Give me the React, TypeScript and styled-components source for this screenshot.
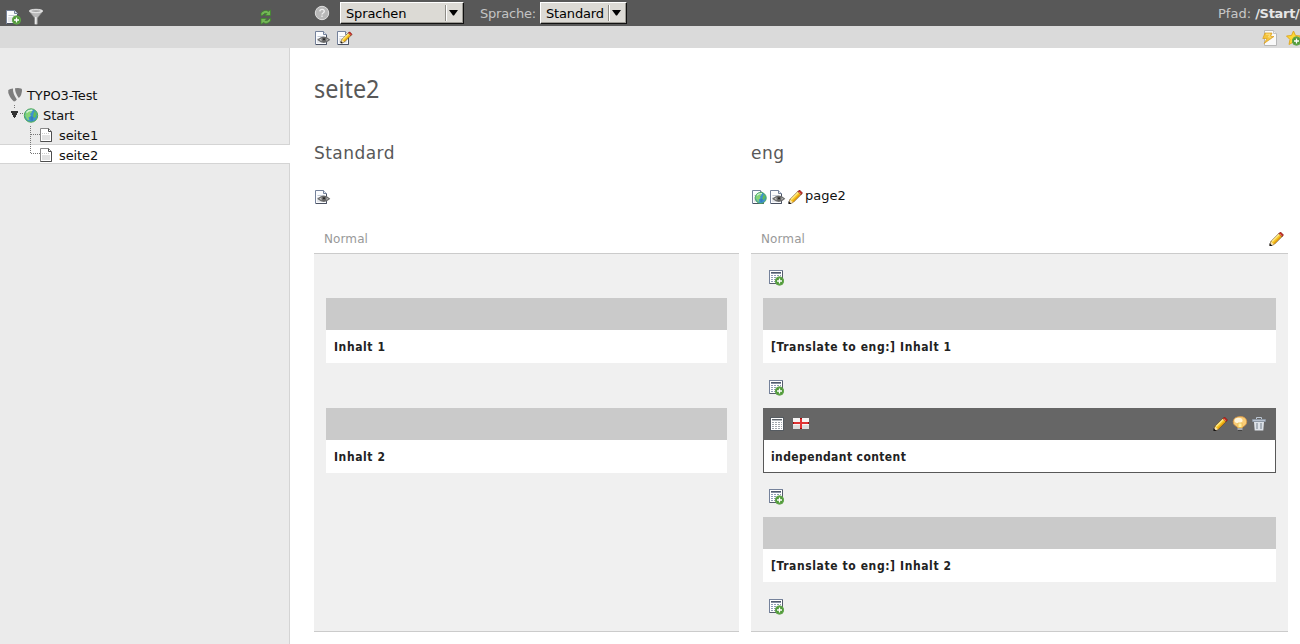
import React from 'react';
import styled, { createGlobalStyle } from 'styled-components';

const GlobalStyle = createGlobalStyle`
  * { box-sizing: border-box; }
  html, body { margin: 0; padding: 0; height: 644px; overflow: hidden; background: #fff; }
  body { font: 13px/16px "DejaVu Sans", Verdana, sans-serif; color: #111; }
  svg { display: block; flex: none; overflow: visible; }
`;

const Page = styled.div`
  width: 1300px;
  height: 644px;
  display: flex;
  flex-direction: column;
  overflow: hidden;
`;
const Bar = styled.div<{ $dark?: boolean }>`
  display: flex;
  flex: none;
  height: ${p => (p.$dark ? 26 : 22)}px;
  background: ${p => (p.$dark ? '#585858' : '#dadada')};
`;
const TreeTools = styled.div`
  width: 290px;
  display: flex;
  padding: 9px 16px 0 6px;
`;
const Spacer = styled.div`
  flex: 1;
`;
const DocTools = styled.div<{ $top: number }>`
  flex: 1;
  min-width: 0;
  display: flex;
  align-items: flex-start;
  padding: ${p => p.$top}px 0 0 24px;
`;
const HelpSlot = styled.span`
  padding-top: 3px;
`;
const StarSlot = styled.span`
  width: 14px;
  overflow: hidden;
`;
const Label = styled.span`
  color: #c4c4c4;
  margin: 4px 4px 0 16px;
  width: 56px;
  letter-spacing: -0.2px;
  white-space: nowrap;
`;
const Path = styled.span`
  color: #c8c8c8;
  padding-top: 4px;
  width: 82px;
  white-space: pre;
  b { color: #e6e6e6; letter-spacing: -0.3px; }
`;
const SelectBox = styled.div<{ $width: number }>`
  display: flex;
  width: ${p => p.$width}px;
  height: 22px;
  background: #dcdad5;
  border: 1px solid #fff;
  border-right-color: #111;
  border-bottom-color: #111;
  box-shadow: inset -1px -1px #9c9a94;
  color: #000;
  padding: 3px 0 0 5px;
`;
const SelectText = styled.span`
  flex: 1;
  letter-spacing: -0.15px;
  white-space: nowrap;
`;
const SelectArrow = styled.span`
  width: 18px;
  height: 16px;
  margin-top: -1px;
  border-left: 1px solid #8e8c87;
  box-shadow: inset 1px 0 #fff;
  padding: 5px 0 0 3px;
`;
const Gap = styled.i<{ $w: number }>`
  width: ${p => p.$w}px;
  flex: none;
`;

const Body = styled.div`
  flex: 1;
  display: flex;
  min-height: 0;
`;
const Tree = styled.div`
  width: 290px;
  flex: none;
  padding-top: 36px;
  background: linear-gradient(90deg, #ebebeb 289px, #d4d4d4 289px);
`;
const TreeRow = styled.div<{ $selected?: boolean }>`
  display: flex;
  height: 20px;
  background: ${p => (p.$selected ? '#fff' : 'none')};
  box-shadow: ${p => (p.$selected ? 'inset 0 1px #d4d4d4, inset 0 -1px #d4d4d4' : 'none')};
`;
const TreeIcon = styled.span<{ $top?: number }>`
  width: 19px;
  padding-top: ${p => p.$top ?? 4}px;
`;
const TreeText = styled.span`
  padding-top: 4px;
  letter-spacing: -0.1px;
`;

const Content = styled.div`
  flex: 1;
  min-width: 0;
  padding: 21px 12px 0 24px;
`;
const Title = styled.h1`
  margin: 0;
  height: 75px;
  font: 400 26px/38px "Noto Sans", "Open Sans", sans-serif;
  color: #585858;
  transform: scaleX(0.9);
  transform-origin: left;
`;
const Columns = styled.div`
  display: grid;
  grid-template-columns: 425px 537px;
  column-gap: 12px;
`;
const Column = styled.section`
  display: flex;
  flex-direction: column;
`;
const LangName = styled.h2`
  margin: 0;
  height: 45px;
  font-size: 17px;
  line-height: 18px;
  font-weight: 400;
  letter-spacing: 0.45px;
  color: #585858;
`;
const LangTools = styled.div`
  display: flex;
  height: 40px;
  gap: 2px;
  padding-left: 1px;
`;
const PageName = styled.span`
  margin-left: -1px;
  margin-top: -1px;
`;
const ColHead = styled.div`
  display: flex;
  justify-content: space-between;
  height: 25px;
  padding: 2px 3px 0 10px;
  border-bottom: 1px solid #cbcbcb;
  color: #999;
  font-size: 12px;
  letter-spacing: 0.1px;
`;
const ColBody = styled.div`
  height: 378px;
  background: #f0f0f0;
  border-bottom: 1px solid #cbcbcb;
  padding: 0 12px;
`;
const NewSlot = styled.div<{ $h: number; $top: number }>`
  height: ${p => p.$h}px;
  padding: ${p => p.$top}px 0 0 6px;
`;
const Element = styled.article<{ $active?: boolean }>`
  height: 65px;
  background: #fff;
  box-shadow: ${p => (p.$active ? 'inset 0 0 0 1px #585858' : 'none')};
`;
const ElementHead = styled.header<{ $active?: boolean }>`
  display: flex;
  height: 32px;
  padding: 8px 10px 0 6px;
  background: ${p => (p.$active ? '#666' : '#cacaca')};
`;
const ElementTitle = styled.div<{ $active?: boolean }>`
  padding: 9px 8px 0;
  font: bold 12px/16px "DejaVu Sans Condensed", "DejaVu Sans", sans-serif;
  font-stretch: condensed;
  letter-spacing: ${p => (p.$active ? 0.4 : 0.6)}px;
  color: #222;
  white-space: nowrap;
`;

const Svg = ({ w = 16, h = 16, crisp, children }: { w?: number; h?: number; crisp?: boolean; children: React.ReactNode }) => (
  <svg width={w} height={h} viewBox={`0 0 ${w} ${h}`} fill="none" shapeRendering={crisp ? 'crispEdges' : undefined}>
    {children}
  </svg>
);

const Sheet = () => (
  <g>
    <path d="M.5 1.5h8l3 3v10H.5z" fill="#fbfcfe" stroke="#75829b" />
    <path d="M8.5 1.5v3h3" fill="#dfe4ec" stroke="#75829b" />
    <path d="M11.5 5v9.500H1" stroke="#4a5161" />
    <path d="M2.500 6.500h6" stroke="#c3cad6" />
    <path d="M2 8h8v5H2z" fill="#e4e6ea" />
  </g>
);
const Plus = () => (
  <g>
    <circle cx="10.500" cy="11" r="4.500" fill="#4f9838" />
    <circle cx="10.500" cy="11" r="4" stroke="#6cae55" strokeWidth=".7" />
    <path d="M8 11h5M10.500 8.500v5" stroke="#fff" strokeWidth="1.300" />
  </g>
);
const Eye = () => (
  <g>
    <path d="M3.200 9.800Q9 4.800 14.300 9.800Q9 14.600 3.200 9.800z" fill="#ccc" stroke="#6d6d6d" strokeWidth="1.300" />
    <circle cx="9" cy="9.500" r="2.600" fill="#666" />
    <circle cx="9" cy="9.300" r="1" fill="#222" />
  </g>
);
const PageNewIcon = () => <Svg><Sheet /><Plus /></Svg>;
const ViewIcon = () => <Svg><Sheet /><Eye /></Svg>;
const PencilShape = () => (
  <g>
    <path d="M1 14.500l1-4L10.500 2l3 3L5 13.500z" fill="#f7ca25" stroke="#5c3b16" strokeWidth=".9" />
    <path d="M3 10.500L10.300 3.200" stroke="#ffe98b" strokeWidth="1.300" />
    <path d="M4.800 12.500l7-7" stroke="#e9a010" strokeWidth="1.200" />
    <path d="M1 14.500l1-4 3 3z" fill="#f9e3b0" />
    <path d="M.5 15v-3l3 3z" fill="#151515" />
    <path d="M10 2.500L11.500 1l3 3L13 5.500z" fill="#cf2a20" stroke="#7d1d16" strokeWidth=".7" />
    <path d="M10.700 2.800l2 2" stroke="#f3a7a0" strokeWidth=".7" />
  </g>
);
const PencilIcon = () => <Svg><PencilShape /></Svg>;
const EditPageIcon = () => (
  <Svg>
    <Sheet />
    <g transform="translate(3.200 1) scale(.82)"><PencilShape /></g>
  </Svg>
);
const FilterIcon = () => (
  <Svg w={15}>
    <path d="M.5 2.500L5.500 9v6q1.500 1 3 0V9l5-6.500z" fill="#b9b9b9" stroke="#8b8b8b" strokeWidth=".7" />
    <path d="M6.800 8v7" stroke="#f2f2f2" strokeWidth="1.300" />
    <ellipse cx="7" cy="2" rx="6.700" ry="1.700" fill="#d8d8d8" stroke="#eee" strokeWidth=".8" />
    <ellipse cx="7" cy="2.100" rx="4.500" ry=".8" fill="#a4a4a4" />
  </Svg>
);
const RefreshIcon = () => (
  <Svg w={12}>
    <path d="M1 7V4Q5-.3 8.500 2.500L10.500.8v5.700H5l2-2Q4.500 3.500 3 6z" fill="#74b757" stroke="#3c8529" strokeWidth=".7" />
    <path d="M10.500 9v3q-3.500 4-7 1.500L1 15.300V9.500h6l-2 2q2.500 1 4-1.500z" fill="#74b757" stroke="#3c8529" strokeWidth=".7" />
  </Svg>
);
const HelpIcon = () => (
  <Svg>
    <circle cx="8" cy="8" r="6.700" fill="#b8b8b8" stroke="#dedede" />
    <path d="M5.800 6.400Q6 4.400 8.100 4.400T10.300 6.300Q10.300 7.300 9.100 8 8 8.600 8 9.500M8 10.500v1.500" stroke="#f0f0f0" strokeWidth="1.300" />
  </Svg>
);
const ArrowIcon = () => <Svg w={9} h={6}><path d="M0 0h9L5 5.500H4z" fill="#000" /></Svg>;
const CacheIcon = () => (
  <Svg>
    <path d="M2.500.5h9l3 3v12h-12z" fill="#f9f9f9" stroke="#b7b7b7" />
    <path d="M11.500.5v3h3" fill="#eee" stroke="#c4c4c4" />
    <path d="M3 3h7L8.500 6.500h3.500L2 13.500l3-5H.8z" fill="#f4c43c" stroke="#d99c20" strokeWidth=".7" />
    <path d="M4 4.200h4L6.500 7H9" stroke="#fbe08a" />
  </Svg>
);
const StarIcon = () => (
  <Svg>
    <path d="M7.500 1l2 4.500 5 .5-3.700 3.500 1 5-4.300-2.500-4.500 2.500 1-5L.5 6l5-.5z" fill="#fcd835" stroke="#dfa41c" strokeWidth=".9" />
    <Plus />
  </Svg>
);
const TypoIcon = () => (
  <Svg w={15}>
    <path d="M.3 2Q2 .6 5 .500 4.500 5 8.800 11.500 7.500 13.600 6 13.600 2.500 11 .3 5z" fill="#7d7d7d" />
    <path d="M7 .3Q14-.5 14 2 14 7 10.800 10 7.200 5.500 7 .3z" fill="#7d7d7d" />
  </Svg>
);
const GlobeShape = () => (
  <g>
    <circle cx="7.500" cy="7.500" r="6.700" fill="#3f91cf" stroke="#50b04c" />
    <path d="M2 5Q4 1.500 9 1.600L8 4.500 6.500 6 7.500 8 5 9.500 6 12.500 3.500 11.500 1.700 8z" fill="#86d576" />
    <path d="M11 3l2.300 3-1.800 4-2-1 .5-3z" fill="#60bf58" />
    <path d="M7 8l3 1-1 4-2-1z" fill="#235d9a" opacity=".35" />
    <path d="M3 4.500Q5 2 9 2.300" stroke="#d9f6d5" strokeWidth="1.300" />
  </g>
);
const GlobeIcon = () => <Svg><g transform="translate(-.5)"><GlobeShape /></g></Svg>;
const LocalizeIcon = () => (
  <Svg>
    <Sheet />
    <g transform="translate(2.500 2.700) scale(.83)"><GlobeShape /></g>
  </Svg>
);
const TreePageIcon = () => (
  <Svg w={13}>
    <path d="M.5.5h8l3 3v10H.5z" fill="#fff" stroke="#888" />
    <path d="M8.500.5v3h3M11.500 4v9.500H.5" stroke="#4e4e4e" />
    <path d="M2 5.500h7" stroke="#ccc" strokeDasharray="1 1" />
    <path d="M2 7h8v5H2z" fill="#e2e2e2" />
  </Svg>
);
const Table = () => (
  <g shapeRendering="crispEdges">
    <path d="M.5.5h13v13H.5z" fill="#fff" stroke="#75829b" />
    <path d="M13.500.5v13H.5" stroke="#555c6c" />
    <path d="M2 2.500h10" stroke="#4f596c" />
    <path d="M2 3.500h10" stroke="#8a93a4" />
    <path d="M2 5.500h10M2 7.500h10M2 9.500h10M2 11.500h10" stroke="#8d9bb5" strokeDasharray="2 1" />
  </g>
);
const NewRecordIcon = () => (
  <Svg>
    <Table />
    <Plus />
  </Svg>
);
const ContentIcon = () => (
  <Svg w={14} crisp>
    <path d="M.5 1.500h13v13H.5z" fill="#fff" stroke="#555b61" />
    <path d="M2 3.500h10" stroke="#626870" />
    <path d="M2 4.500h10" stroke="#b7bcc0" />
    <path d="M2 6.500h10M2 8.500h10M2 10.500h10M2 12.500h10" stroke="#a0a6ac" strokeDasharray="2 1" />
  </Svg>
);
const FlagIcon = () => (
  <Svg crisp>
    <path d="M0 2h16v11H0z" fill="#f7f5f5" />
    <path d="M0 9h7v4H0zM9 9h7v4H9z" fill="#dedede" />
    <path d="M7 2h2v11H7zM0 6h16v2H0z" fill="#df3434" />
    <path d="M7 2h2v1H7zM7 12h2v1H7zM0 6h1v2H0zM15 6h1v2h-1z" fill="#a90909" />
  </Svg>
);
const BulbIcon = () => (
  <Svg>
    <path d="M5.500 11.500Q5 10.500 3 9.500 1 8 1.200 5.500 2 .8 8 .6t6.700 4.900Q14.800 8 13 9.500 11 10.500 10.500 11.500z" fill="#f8cc77" stroke="#d89642" strokeWidth=".8" />
    <ellipse cx="6.500" cy="4.500" rx="4" ry="2.800" fill="#fff5d9" />
    <path d="M6 7h4v4.500H6z" fill="#fff0a2" stroke="#eab84c" strokeWidth=".8" />
    <path d="M5.500 12h5v2h-5z" fill="#aaa" />
    <path d="M6 14.500h4" stroke="#444" />
  </Svg>
);
const TrashIcon = () => (
  <Svg w={14}>
    <path d="M4.500 3V1.500h5V3" stroke="#bcc6d2" />
    <path d="M.5 3.500h13v2H.5z" fill="#b8c2cf" stroke="#8e9aa9" strokeWidth=".7" />
    <path d="M2 6h10l-.7 8.500H2.700z" fill="#dde2e8" />
    <path d="M5 7v6M9 7v6" stroke="#77818d" />
  </Svg>
);

const Select = ({ text, width }: { text: string; width: number }) => (
  <SelectBox $width={width}>
    <SelectText>{text}</SelectText>
    <SelectArrow><ArrowIcon /></SelectArrow>
  </SelectBox>
);

const ContentElement = ({ title, active }: { title: string; active?: boolean }) => (
  <Element $active={active}>
    <ElementHead $active={active}>
      {active && (
        <>
          <Gap $w={1} /><ContentIcon /><Gap $w={9} /><FlagIcon />
          <Spacer />
          <PencilIcon /><Gap $w={3} /><BulbIcon /><Gap $w={4} /><TrashIcon />
        </>
      )}
    </ElementHead>
    <ElementTitle $active={active}>{title}</ElementTitle>
  </Element>
);

const dots = { stroke: '#777', strokeDasharray: '1 1' };

export default function App() {
  return (
    <Page>
      <GlobalStyle />
      <Bar $dark>
        <TreeTools>
          <PageNewIcon /><Gap $w={7} /><FilterIcon />
          <Spacer />
          <RefreshIcon /><Gap $w={2} />
        </TreeTools>
        <DocTools $top={2}>
          <HelpSlot><HelpIcon /></HelpSlot>
          <Gap $w={10} />
          <Select text="Sprachen" width={124} />
          <Label>Sprache:</Label>
          <Select text="Standard" width={87} />
          <Spacer />
          <Path>Pfad: <b>/Start/</b></Path>
        </DocTools>
      </Bar>
      <Bar>
        <TreeTools />
        <DocTools $top={4}>
          <Gap $w={1} /><ViewIcon /><Gap $w={6} /><EditPageIcon />
          <Spacer />
          <CacheIcon /><Gap $w={8} /><StarSlot><StarIcon /></StarSlot>
        </DocTools>
      </Bar>
      <Body>
        <Tree>
          <TreeRow>
            <Gap $w={8} /><TreeIcon><TypoIcon /></TreeIcon><TreeText>TYPO3-Test</TreeText>
          </TreeRow>
          <TreeRow>
            <Svg w={24} h={20} crisp>
              <path d="M14.500 1v4M20 9.500h4" {...dots} />
              <path d="M10.500 7h8l-3.500 6.500h-1z" fill="#333" />
            </Svg>
            <TreeIcon $top={3.5}><GlobeIcon /></TreeIcon><TreeText>Start</TreeText>
          </TreeRow>
          <TreeRow>
            <Svg w={40} h={20} crisp><path d="M30.500 2v18M31 10.500h9" {...dots} /></Svg>
            <TreeIcon><TreePageIcon /></TreeIcon><TreeText>seite1</TreeText>
          </TreeRow>
          <TreeRow $selected>
            <Svg w={40} h={20} crisp><path d="M30.500 0v10M31 9.500h9" {...dots} /></Svg>
            <TreeIcon><TreePageIcon /></TreeIcon><TreeText>seite2</TreeText>
          </TreeRow>
        </Tree>
        <Content>
          <Title>seite2</Title>
          <Columns>
            <Column>
              <LangName>Standard</LangName>
              <LangTools><ViewIcon /></LangTools>
              <ColHead>Normal</ColHead>
              <ColBody>
                <NewSlot $h={44} $top={16} />
                <ContentElement title="Inhalt 1" />
                <NewSlot $h={45} $top={17} />
                <ContentElement title="Inhalt 2" />
              </ColBody>
            </Column>
            <Column>
              <LangName>eng</LangName>
              <LangTools>
                <LocalizeIcon /><ViewIcon /><PencilIcon />
                <PageName>page2</PageName>
              </LangTools>
              <ColHead>Normal<PencilIcon /></ColHead>
              <ColBody>
                <NewSlot $h={44} $top={16}><NewRecordIcon /></NewSlot>
                <ContentElement title="[Translate to eng:] Inhalt 1" />
                <NewSlot $h={45} $top={17}><NewRecordIcon /></NewSlot>
                <ContentElement title="independant content" active />
                <NewSlot $h={44} $top={16}><NewRecordIcon /></NewSlot>
                <ContentElement title="[Translate to eng:] Inhalt 2" />
                <NewSlot $h={45} $top={17}><NewRecordIcon /></NewSlot>
              </ColBody>
            </Column>
          </Columns>
        </Content>
      </Body>
    </Page>
  );
}
